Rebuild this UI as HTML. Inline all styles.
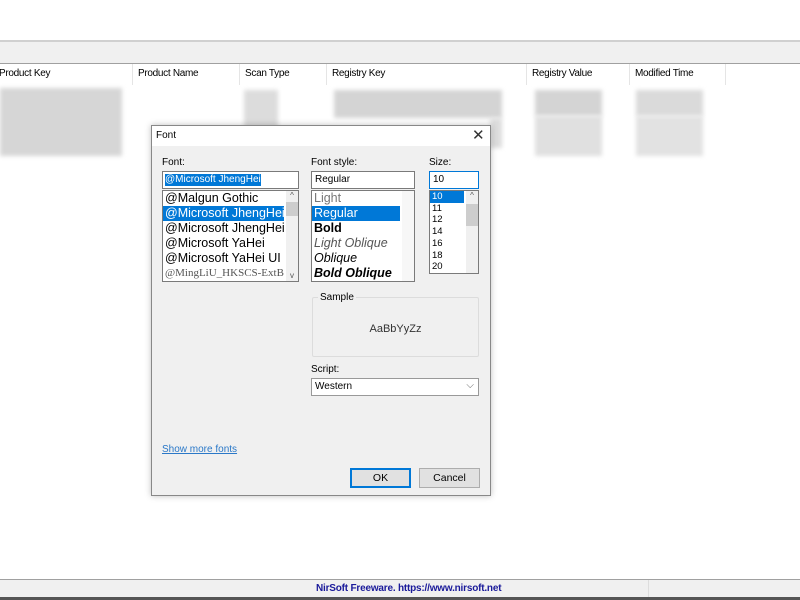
<!DOCTYPE html>
<html><head><meta charset="utf-8"><style>
*{box-sizing:border-box;margin:0;padding:0}
body{width:800px;height:600px;overflow:hidden;background:#fff;font-family:"Liberation Sans",sans-serif;font-size:11px;color:#000;position:relative}
.a{position:absolute}
.blur{position:absolute;background:#dcdcdc;filter:blur(2px)}
.hdr{position:absolute;top:64px;height:21px;line-height:20px;font-size:10px;padding-left:5px;border-right:1px solid #e5e5e5;letter-spacing:-0.3px}
.lb{position:absolute;background:#fff;border:1px solid #7a7a7a}
.it{height:15px;line-height:15px;padding-left:2px;white-space:nowrap;overflow:hidden}
.sel{background:#0078d7;color:#fff}
.btn{position:absolute;height:20px;border:1px solid #adadad;background:#e1e1e1;text-align:center;line-height:18px;font-size:10.5px}
.sb{position:absolute;width:12px;background:#f0f0f0}
</style></head><body>
<div class="a" style="left:0;top:40px;width:800px;height:2px;background:#d0d0d0"></div>
<div class="a" style="left:0;top:42px;width:800px;height:22px;background:#f0f0f0;border-bottom:1px solid #a0a0a0"></div>
<div class="hdr" style="left:-6px;width:139px">Product Key</div>
<div class="hdr" style="left:133px;width:107px">Product Name</div>
<div class="hdr" style="left:240px;width:87px">Scan Type</div>
<div class="hdr" style="left:327px;width:200px">Registry Key</div>
<div class="hdr" style="left:527px;width:103px">Registry Value</div>
<div class="hdr" style="left:630px;width:96px">Modified Time</div>
<div class="blur" style="left:0;top:88px;width:122px;height:68px;background:#d6d6d6"></div>
<div class="blur" style="left:244px;top:90px;width:34px;height:40px"></div>
<div class="blur" style="left:334px;top:90px;width:168px;height:28px;background:#d4d4d4"></div>
<div class="blur" style="left:535px;top:90px;width:67px;height:26px;background:#d4d4d4"></div>
<div class="blur" style="left:636px;top:90px;width:67px;height:26px;background:#dadada"></div>
<div class="blur" style="left:535px;top:116px;width:67px;height:40px;background:#e0e0e0"></div>
<div class="blur" style="left:636px;top:116px;width:67px;height:40px;background:#e2e2e2"></div>
<div class="blur" style="left:490px;top:118px;width:12px;height:30px"></div>
<!-- dialog -->
<div class="a" style="left:151px;top:125px;width:340px;height:371px;background:#f0f0f0;border:1px solid #888;box-shadow:0 0 6px rgba(0,0,0,.25)">
 <div class="a" style="left:0;top:0;width:338px;height:20px;background:#fff"></div>
 <div class="a" style="left:4px;top:4px;font-size:10px">Font</div>
 <div class="a" style="left:320px;top:0px;font-size:15px;color:#333">✕</div>
 <div class="a" style="left:10px;top:31px;font-size:10px">Font:</div>
 <div class="a" style="left:159px;top:31px;font-size:10px">Font style:</div>
 <div class="a" style="left:277px;top:31px;font-size:10px">Size:</div>
 <div class="lb" style="left:10px;top:45px;width:137px;height:18px;border-color:#7a7a7a"><span style="background:#0078d7;color:#fff;font-size:10px;margin:2px;display:inline-block;line-height:12px">@Microsoft JhengHei</span></div>
 <div class="lb" style="left:159px;top:45px;width:104px;height:18px;padding:2px 3px;font-size:10px">Regular</div>
 <div class="lb" style="left:277px;top:45px;width:50px;height:18px;padding:2px 3px;font-size:10px;border-color:#0078d7">10</div>
 <div class="lb" style="left:10px;top:64px;width:137px;height:92px;font-size:12.5px">
  <div class="it">@Malgun Gothic</div><div class="it sel" style="width:121px">@Microsoft JhengHei</div><div class="it">@Microsoft JhengHei UI</div><div class="it">@Microsoft YaHei</div><div class="it">@Microsoft YaHei UI</div><div class="it" style="font-family:'Liberation Serif',serif;font-size:11px;color:#555">@MingLiU_HKSCS-ExtB</div>
  <div class="sb" style="left:123px;top:0;height:90px"><div style="font-size:8px;text-align:center;color:#555">^</div><div style="margin-top:2px;height:14px;background:#cdcdcd"></div><div style="position:absolute;bottom:1px;width:12px;text-align:center;font-size:8px;color:#555">v</div></div>
 </div>
 <div class="lb" style="left:159px;top:64px;width:104px;height:92px;font-size:12.5px">
  <div class="it" style="color:#777">Light</div><div class="it sel" style="width:88px">Regular</div><div class="it" style="font-weight:bold">Bold</div><div class="it" style="font-style:italic;color:#555">Light Oblique</div><div class="it" style="font-style:italic">Oblique</div><div class="it" style="font-style:italic;font-weight:bold">Bold Oblique</div>
  <div class="sb" style="left:90px;top:0;height:90px;background:#f7f7f7"></div>
 </div>
 <div class="lb" style="left:277px;top:64px;width:50px;height:84px;font-size:9.5px">
  <div style="height:11.5px;line-height:11px;padding-left:2px;background:#0078d7;color:#fff;width:34px">10</div>
  <div style="line-height:11.8px;padding-left:2px">11<br>12<br>14<br>16<br>18<br>20</div>
  <div class="sb" style="left:36px;top:0;height:82px"><div style="font-size:8px;text-align:center;color:#555">^</div><div style="margin-top:4px;height:22px;background:#cdcdcd"></div></div>
 </div>
 <div class="a" style="left:160px;top:171px;width:167px;height:60px;border:1px solid #dcdcdc;border-radius:2px"></div>
 <div class="a" style="left:166px;top:166px;font-size:10px;background:#f0f0f0;padding:0 2px">Sample</div>
 <div class="a" style="left:160px;top:197px;width:167px;text-align:center;font-size:11px;color:#333">AaBbYyZz</div>
 <div class="a" style="left:159px;top:238px;font-size:10px">Script:</div>
 <div class="lb" style="left:159px;top:252px;width:168px;height:18px;padding:2px 3px;font-size:10px;border-color:#999">Western<span style="position:absolute;right:4px;top:1px;color:#666">⌵</span></div>
 <div class="a" style="left:10px;top:318px;font-size:10px;color:#2a78c8;text-decoration:underline">Show more fonts</div>
 <div class="btn" style="left:198px;top:342px;width:61px;border:2px solid #0078d7;line-height:16px">OK</div>
 <div class="btn" style="left:267px;top:342px;width:61px">Cancel</div>
</div>
<div class="a" style="left:0;top:579px;width:800px;height:1px;background:#a0a0a0"></div>
<div class="a" style="left:0;top:580px;width:800px;height:17px;background:#f0f0f0"></div>
<div class="a" style="left:648px;top:580px;width:1px;height:17px;background:#ddd"></div>
<div class="a" style="left:316px;top:583px;font-size:10px;color:#1a1a9a;font-weight:bold;letter-spacing:-0.2px">NirSoft Freeware. https://www.nirsoft.net</div>
<div class="a" style="left:0;top:597px;width:800px;height:3px;background:#555"></div>
</body></html>
